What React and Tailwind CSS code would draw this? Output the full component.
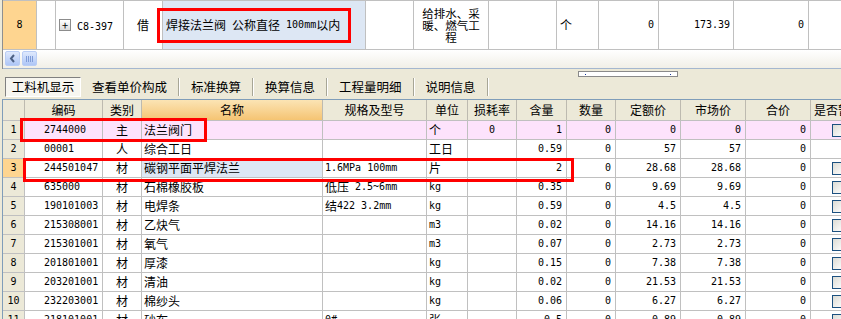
import React from "react";

// split ascii runs so digits/latin get the narrow mono face like SimSun
function Txt({ s }) {
  if (!s) return null;
  const parts = s.match(/[\x00-\x7f]+|[^\x00-\x7f]+/g) || [];
  return parts.map((p, i) =>
    /^[\x00-\x7f]/.test(p) ? (
      <span key={i} className="font-['DejaVu_Sans_Mono',monospace] text-[10px] whitespace-pre">
        {p}
      </span>
    ) : (
      <span key={i}>{p}</span>
    )
  );
}

const cols = [
  { w: "w-[22px]", a: "justify-center" },
  { w: "w-[78px]", a: "pl-[19px]" },
  { w: "w-[39px]", a: "justify-center" },
  { w: "w-[181px]", a: "pl-[2px]" },
  { w: "w-[104px]", a: "pl-[2px]" },
  { w: "w-[41px]", a: "pl-[2px]" },
  { w: "w-[49px]", a: "justify-center" },
  { w: "w-[50px]", a: "justify-end pr-[4px]" },
  { w: "w-[49px]", a: "justify-end pr-[4px]" },
  { w: "w-[65px]", a: "justify-end pr-[4px]" },
  { w: "w-[65px]", a: "justify-end pr-[4px]" },
  { w: "w-[65px]", a: "justify-end pr-[4px]" },
  { w: "w-[60px]", a: "pl-[21px]" },
];

const heads = ["", "编码", "类别", "名称", "规格及型号", "单位", "损耗率", "含量", "数量", "定额价", "市场价", "合价", "是否暂估"];

const rows = [
  ["1", "2744000", "主", "法兰阀门", "", "个", "0", "1", "0", "0", "0", "0", true],
  ["2", "00001", "人", "综合工日", "", "工日", "", "0.59", "0", "57", "57", "0", false],
  ["3", "244501047", "材", "碳钢平面平焊法兰", "1.6MPa 100mm", "片", "", "2", "0", "28.68", "28.68", "0", true],
  ["4", "635000", "材", "石棉橡胶板", "低压 2.5~6mm", "kg", "", "0.35", "0", "9.69", "9.69", "0", true],
  ["5", "190101003", "材", "电焊条", "结422 3.2mm", "kg", "", "0.59", "0", "4.5", "4.5", "0", true],
  ["6", "215308001", "材", "乙炔气", "", "m3", "", "0.02", "0", "14.16", "14.16", "0", true],
  ["7", "215301001", "材", "氧气", "", "m3", "", "0.07", "0", "2.73", "2.73", "0", true],
  ["8", "201801001", "材", "厚漆", "", "kg", "", "0.15", "0", "7.38", "7.38", "0", true],
  ["9", "203201001", "材", "清油", "", "kg", "", "0.02", "0", "21.53", "21.53", "0", true],
  ["10", "232203001", "材", "棉纱头", "", "kg", "", "0.06", "0", "6.27", "6.27", "0", true],
  ["11", "218101001", "材", "砂布", "0#", "张", "", "0.5", "0", "0.89", "0.89", "0", true],
];

const tabs = ["查看单价构成", "标准换算", "换算信息", "工程量明细", "说明信息"];

function Check() {
  return (
    <div className="w-[13px] h-[13px] border border-[#1c5180] bg-gradient-to-br from-[#dcdcd5] to-white" />
  );
}

export default function App() {
  return (
    <div className="relative w-[841px] h-[319px] overflow-hidden bg-[#ece9d8] font-['Noto_Sans_CJK_SC',sans-serif] text-[12px] text-black leading-none">
      {/* upper grid (quota row) */}
      <div className="ml-[2px] border-l border-[#8e8f8f] bg-white">
        <div className="flex h-[50px] border-t border-b border-[#c0c0c0]">
          <div className="w-[34px] shrink-0 flex items-center justify-center bg-[#fed590] border-r border-[#c0c0c0]">
            <Txt s="8" />
          </div>
          <div className="w-[19px] shrink-0 border-r border-[#c0c0c0]" />
          <div className="w-[68px] shrink-0 flex items-center pl-[3px] border-r border-[#c0c0c0]">
            <div className="w-[12px] h-[12px] border border-[#8c8c8c] bg-gradient-to-b from-white to-[#dcdcdc] flex items-center justify-center text-[11px] leading-none">
              +
            </div>
            <div className="ml-[6px]">
              <Txt s="C8-397" />
            </div>
          </div>
          <div className="w-[39px] shrink-0 flex items-center justify-center border-r border-[#c0c0c0]">借</div>
          <div className="w-[203px] shrink-0 flex items-center pl-[3px] bg-[#dde7f4] border-r border-[#c0c0c0]">
            <Txt s="焊接法兰阀 公称直径 100mm以内" />
          </div>
          <div className="w-[48px] shrink-0 border-r border-[#c0c0c0]" />
          <div className="w-[75px] shrink-0 flex items-center justify-center border-r border-[#c0c0c0]">
            <div className="w-[62px] text-center leading-[12px] text-[11.5px]">给排水、采暖、燃气工程</div>
          </div>
          <div className="w-[68px] shrink-0 border-r border-[#c0c0c0]" />
          <div className="w-[42px] shrink-0 flex items-center pl-[3px] border-r border-[#c0c0c0]">个</div>
          <div className="w-[60px] shrink-0 flex items-center justify-end pr-[4px] border-r border-[#c0c0c0]">
            <Txt s="0" />
          </div>
          <div className="w-[75px] shrink-0 flex items-center justify-end pr-[3px] border-r border-[#c0c0c0]">
            <Txt s="173.39" />
          </div>
          <div className="w-[75px] shrink-0 flex items-center justify-end pr-[4px] border-r border-[#c0c0c0]">
            <Txt s="0" />
          </div>
          <div className="flex-1" />
        </div>
        {/* horizontal scroll strip */}
        <div className="h-[19px] flex items-start gap-[2px] pl-[2px] pt-[1px] bg-gradient-to-b from-white to-[#f1efe7] border-b border-[#a5b7cf]">
          <div className="w-[15px] h-[15px] rounded-[2px] border border-[#b9cdf5] bg-gradient-to-b from-[#dfe9fd] to-[#aec6f6] flex items-center justify-center">
            <svg width="7" height="9" viewBox="0 0 7 9">
              <path d="M5 1 L2 4.5 L5 8" stroke="#4d6185" strokeWidth="2" fill="none" />
            </svg>
          </div>
          <div className="w-[15px] h-[15px] rounded-[2px] border border-[#b9cdf5] bg-gradient-to-b from-[#dfe9fd] to-[#aec6f6] flex items-center justify-center gap-[1px]">
            <div className="w-[1px] h-[6px] bg-[#7f9cd8]" />
            <div className="w-[1px] h-[6px] bg-[#7f9cd8]" />
            <div className="w-[1px] h-[6px] bg-[#7f9cd8]" />
            <div className="w-[1px] h-[6px] bg-[#7f9cd8]" />
          </div>
        </div>
      </div>

      {/* splitter grip */}
      <div className="h-[8px] pt-[2px]">
        <div className="ml-[578px] w-[100px] h-[6px] border border-[#8a8a8a] bg-white flex items-center justify-between px-[6px]">
          <div className="w-[1px] h-[1px] bg-[#1c3a9a]" />
          <div className="w-[1px] h-[1px] bg-[#1c3a9a]" />
        </div>
      </div>

      {/* tabs */}
      <div className="flex items-center h-[20px] pl-[5px]">
        <div className="w-[76px] h-[20px] flex items-center justify-center border-t border-l border-[#808080] border-b border-r border-b-white border-r-white bg-[#f7f6f0] text-[12.5px]">
          工料机显示
        </div>
        {tabs.map((t) => (
          <React.Fragment key={t}>
            <div className="px-[11px] text-[12.5px]">{t}</div>
            <div className="w-[2px] h-[18px] border-l border-[#a7a696] border-r border-r-white" />
          </React.Fragment>
        ))}
      </div>

      {/* material grid */}
      <div className="mt-[2px] ml-[2px] border-l border-t border-[#7f9db9] bg-white">
        <div className="flex h-[21px] bg-[#ece9d8] border-b border-[#c0c0c0]">
          {cols.map((c, i) => (
            <div
              key={i}
              className={`${c.w} shrink-0 flex items-center overflow-hidden whitespace-nowrap border-r border-[#bdbab0] ${
                i === 3 ? "bg-gradient-to-b from-[#fbe4b4] to-[#f5c472]" : ""
              } ${i === 12 ? "justify-start pl-[3px]" : "justify-center"}`}
            >
              {heads[i]}
            </div>
          ))}
        </div>
        {rows.map((r, ri) => (
          <div key={ri} className={`flex h-[19px] border-b border-[#c0c0c0] ${ri === 0 ? "bg-[#fde3fc]" : ""}`}>
            {cols.map((c, i) => {
              let bg = "";
              if (i === 0) bg = ri === 2 ? "bg-[#fed590]" : "bg-[#ece9d8]";
              if (i === 3 && ri === 2) bg = "bg-[#dde7f4]";
              return (
                <div
                  key={i}
                  className={`${c.w} ${c.a} ${bg} shrink-0 flex items-center overflow-hidden whitespace-nowrap border-r border-[#c0c0c0]`}
                >
                  {i === 12 ? r[12] && <Check /> : <Txt s={r[i]} />}
                </div>
              );
            })}
          </div>
        ))}
      </div>

      {/* red annotation boxes */}
      <div className="absolute left-[157px] top-[8px] w-[194px] h-[35px] border-[3px] border-[#ff0000] pointer-events-none" />
      <div className="absolute left-[20px] top-[118px] w-[187px] h-[24px] border-[3px] border-[#ff0000] pointer-events-none" />
      <div className="absolute left-[23px] top-[158px] w-[551px] h-[24px] border-[3px] border-[#ff0000] pointer-events-none" />
    </div>
  );
}
